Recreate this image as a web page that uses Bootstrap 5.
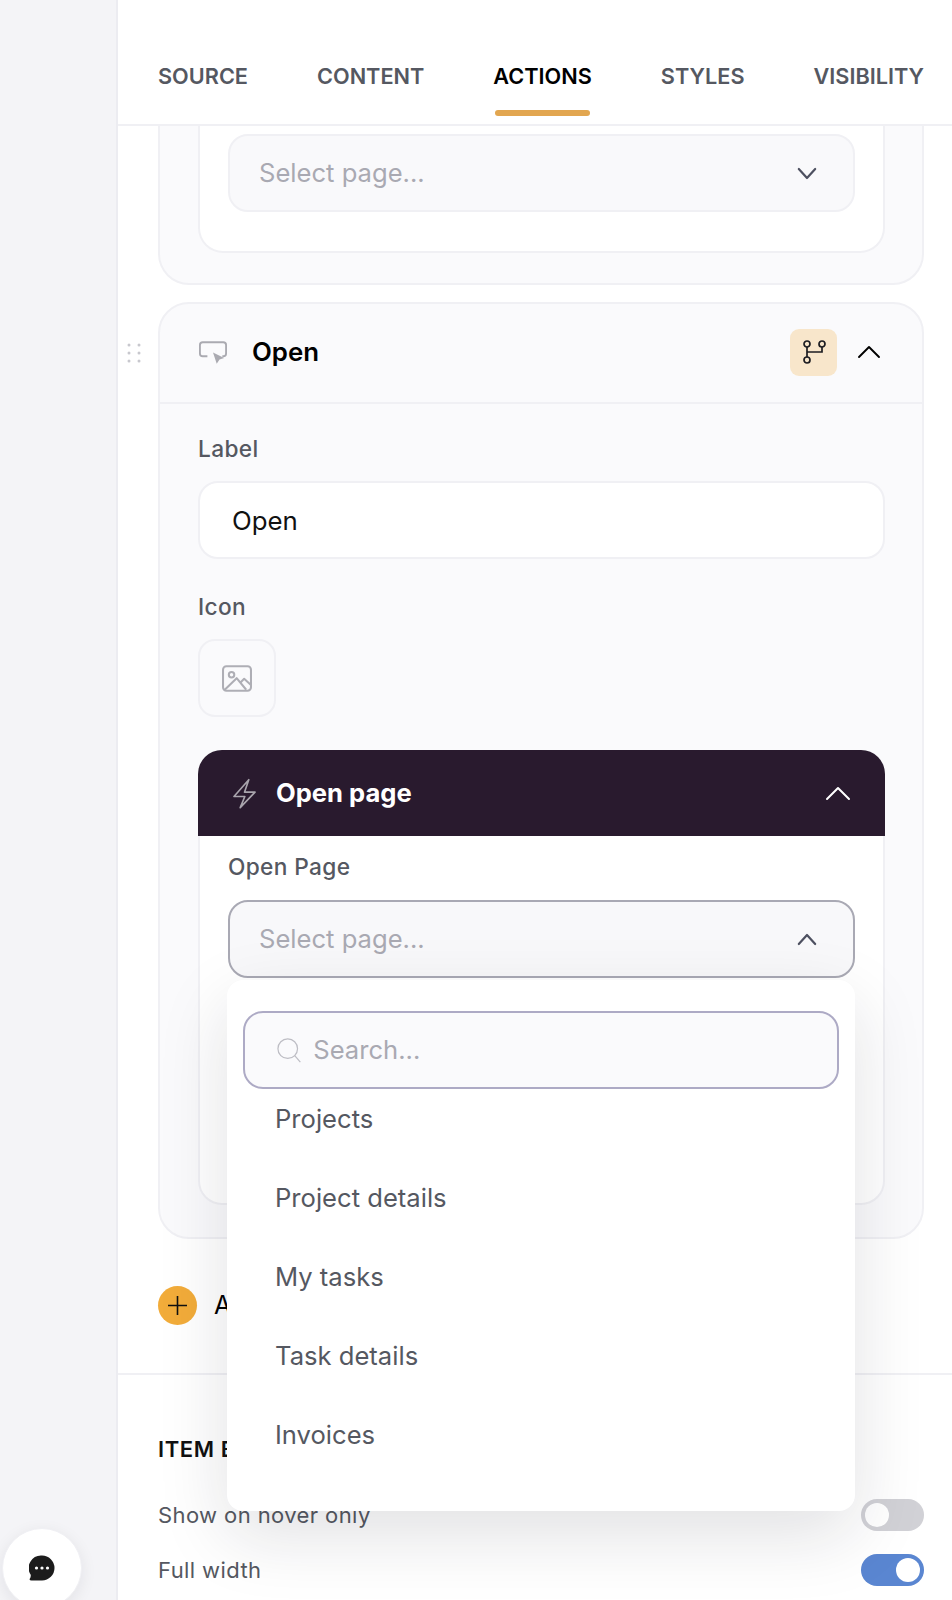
<!DOCTYPE html>
<html lang="en">
<head>
  <meta charset="UTF-8">
  <title>Actions panel</title>
  <meta name="viewport" content="width=device-width, initial-scale=1.0">
  <link rel="stylesheet" href="https://cdn.jsdelivr.net/npm/bootstrap@5.3.0/dist/css/bootstrap.min.css">
  <style>
    body {
      width: 952px;
      height: 1600px;
      overflow: hidden;
      font-family: Inter, "Liberation Sans", sans-serif;
      color: #000;
      background-color: #fff;
    }
    .rail {
      width: 118px;
      flex: none;
      background-color: #f4f4f7;
      border-right: 2px solid #ececf1;
    }
    .panel-main { width: 834px; flex: none; }
    .tabs-bar {
      height: 126px;
      padding: 60px 0 0 40px;
      gap: 69px;
      border-bottom: 2px solid #f0f0f4;
    }
    .tab-item {
      font-size: 21.7px;
      line-height: 32px;
      font-weight: 600;
      color: #555861;
      white-space: nowrap;
    }
    .tab-item.active { color: #000; }
    .tab-bar-line {
      display: block;
      height: 6px;
      margin: 18px 2px 0;
      border-radius: 3px;
    }
    .tab-item.active .tab-bar-line { background-color: #e2a650; }
    .panel-scroll { padding: 0 28px 0 40px; }
    .outer-box {
      background-color: #fafafc;
      border: 2px solid #f0f0f4;
      border-radius: 31px;
      overflow: visible;
    }
    .outer-cut {
      border-top: 0;
      border-top-left-radius: 0;
      border-top-right-radius: 0;
      padding: 0 37px 30px 38px;
      margin-bottom: 17px;
    }
    .inner-cut {
      background-color: #fff;
      border: 2px solid #f0f0f4;
      border-top: 0;
      border-radius: 0 0 25px 25px;
      padding: 8px 28px 39px 28px;
    }
    .fake-select {
      height: 78px;
      padding: 1px 36px 0 29px;
      background-color: #f9f9fb;
      border: 2px solid #f0f0f4;
      border-radius: 20px;
      font-size: 25.6px;
      color: #a9a9b2;
    }
    .fake-select.is-open {
      border-color: #a9a9b4;
      background-color: #f8f8fa;
    }
    .open-head {
      height: 100px;
      padding: 0 41px 2px 39px;
      border-bottom: 2px solid #f0f0f4;
    }
    .open-title { font-size: 25.8px; font-weight: 600; margin-left: 25px; }
    .drag-dots { position: absolute; left: -33px; top: 38px; }
    .branch-btn {
      width: 47px;
      height: 47px;
      background-color: #f8e6cb;
      border-radius: 9px;
      margin-right: 20px;
    }
    .open-body { padding: 29px 37px 32px 38px; }
    .field-label {
      font-size: 22.7px;
      line-height: 32px;
      font-weight: 500;
      letter-spacing: .35px;
      color: #555861;
      margin-bottom: 16px;
    }
    .label-input {
      height: 78px;
      padding: 1px 32px 0;
      margin-bottom: 32px;
      font-size: 25.8px;
      color: #111;
      border: 2px solid #f0f0f4;
      border-radius: 20px;
    }
    .icon-box {
      width: 78px;
      height: 78px;
      background-color: #fafafc;
      border: 2px solid #f0f0f4;
      border-radius: 17px;
      margin-bottom: 33px;
    }
    .action-box { border-radius: 24px; }
    .action-head {
      height: 86px;
      padding: 0 34px 0 35px;
      background-color: #291a2e;
      border-radius: 24px 24px 0 0;
      color: #fff;
      font-size: 25.6px;
      font-weight: 700;
    }
    .action-head .head-text { margin-left: 20px; }
    .action-body {
      height: 369px;
      padding: 15px 28px 0 28px;
      background-color: #fff;
      border: 2px solid #f0f0f4;
      border-top: 0;
      border-radius: 0 0 24px 24px;
    }
    .action-body .field-label { margin-bottom: 17px; }
    .select-wrap { position: relative; }
    .page-menu {
      position: absolute;
      left: -1px;
      top: 80px;
      width: 628px;
      height: 531px;
      z-index: 5;
      padding: 31px 16px 0;
      background-color: #fff;
      border-radius: 16px;
      box-shadow: 0 24px 70px rgba(20, 20, 40, .13);
    }
    .search-field {
      height: 78px;
      padding: 0 14px 0 32px;
      background-color: #fafafc;
      border: 2px solid #adaac5;
      border-radius: 20px;
    }
    .search-field input {
      border: 0;
      padding: 0;
      margin-left: 12px;
      background: transparent;
      font-size: 25.6px;
      box-shadow: none;
    }
    .search-field input::placeholder { color: #a9a9b2; opacity: 1; }
    .page-list .list-group-item {
      height: 79px;
      padding: 0 0 0 32px;
      border: 0;
      font-size: 25.6px;
      color: #555861;
      line-height: 60px;
    }
    .page-list { margin-top: 0; }
    .add-row {
      margin-top: 47px;
      padding-bottom: 48px;
      font-size: 25px;
      line-height: 39px;
    }
    .add-circle {
      width: 39px;
      height: 39px;
      margin-right: 17px;
      border-radius: 50%;
      background-color: #f2ac3a;
    }
    .section-rule { border-top: 2px solid #f0f0f4; margin: 0 -28px 0 -40px; }
    .section-title {
      margin-top: 58px;
      font-size: 22px;
      line-height: 32px;
      font-weight: 600;
      letter-spacing: .6px;
      color: #111;
    }
    .setting-row {
      height: 32px;
      font-size: 22px;
      color: #555861;
      letter-spacing: .4px;
      margin-bottom: 23px;
    }
    .section-title + .setting-row { margin-top: 34px; }
    .setting-row .form-check {
      min-height: 0;
      margin: 0;
      padding: 0;
      line-height: 0;
    }
    .setting-row .form-check-input {
      width: 63px;
      height: 32px;
      margin: 0;
      border: 0;
      background-color: #d1d1d6;
      background-image: url("data:image/svg+xml,%3csvg xmlns='http://www.w3.org/2000/svg' viewBox='-4 -4 8 8'%3e%3ccircle r='3' fill='%23fff'/%3e%3c/svg%3e");
      box-shadow: none;
    }
    .setting-row .form-check-input:checked { background-color: #5a86d1; }
    .chat-btn {
      position: absolute;
      left: 2px;
      top: 1528px;
      width: 80px;
      height: 80px;
      padding: 0;
      border: 1px solid #f0f0f4;
      border-radius: 50%;
      background-color: #fff;
      box-shadow: 0 4px 16px rgba(20, 20, 40, .08);
      z-index: 6;
    }
  </style>
</head>
<body>
  <div class="d-flex position-relative">
    <div class="rail"></div>

    <div class="panel-main">
      <div class="tabs-bar d-flex">
        <div class="tab-item">SOURCE<span class="tab-bar-line"></span></div>
        <div class="tab-item">CONTENT<span class="tab-bar-line"></span></div>
        <div class="tab-item active">ACTIONS<span class="tab-bar-line"></span></div>
        <div class="tab-item">STYLES<span class="tab-bar-line"></span></div>
        <div class="tab-item">VISIBILITY<span class="tab-bar-line"></span></div>
      </div>

      <div class="panel-scroll">
        <!-- previous action, scrolled under the tabs -->
        <div class="outer-box outer-cut">
          <div class="inner-cut">
            <div class="fake-select d-flex align-items-center justify-content-between">
              <span>Select page...</span>
              <svg width="20" height="13" viewBox="0 0 22 14" fill="none" stroke="#4d5060" stroke-width="2.4" stroke-linecap="round" stroke-linejoin="round"><path d="M2 2l9 10 9-10"/></svg>
            </div>
          </div>
        </div>

        <div class="outer-box position-relative">
          <svg class="drag-dots" width="16" height="22" viewBox="0 0 16 22" fill="#c8c8ce"><circle cx="2" cy="3" r="1.5"/><circle cx="12" cy="3" r="1.5"/><circle cx="2" cy="11" r="1.5"/><circle cx="12" cy="11" r="1.5"/><circle cx="2" cy="19" r="1.5"/><circle cx="12" cy="19" r="1.5"/></svg>

          <div class="open-head d-flex align-items-center">
            <svg width="28" height="24" viewBox="0 0 30 25" fill="none"><path d="M9 17H4a3 3 0 0 1-3-3V5a3 3 0 0 1 3-3h22a3 3 0 0 1 3 3v9a3 3 0 0 1-3 3h-1" stroke="#aaaab1" stroke-width="2"/><path d="M15 13l12 6-5 1.5-3 4.500z" fill="#aaaab1"/></svg>
            <span class="open-title">Open</span>
            <div class="branch-btn d-flex align-items-center justify-content-center ms-auto">
              <svg width="24" height="24" viewBox="0 0 24 24" fill="none" stroke="#1d1d22" stroke-width="1.7"><circle cx="5" cy="4" r="3"/><circle cx="20" cy="4" r="3"/><circle cx="5" cy="20" r="3"/><path d="M5 7v10M5 12h15V7"/></svg>
            </div>
            <svg width="24" height="14" viewBox="0 0 24 14" fill="none" stroke="#000" stroke-width="1.9" stroke-linecap="round" stroke-linejoin="round"><path d="M2 12L12 2l10 10"/></svg>
          </div>

          <div class="open-body">
            <div class="field-label">Label</div>
            <input class="form-control label-input" type="text" value="Open">

            <div class="field-label">Icon</div>
            <div class="icon-box d-flex align-items-center justify-content-center">
              <svg width="30" height="27" viewBox="127 226 88 78" fill="none" stroke="#aeaeb5" stroke-width="6" stroke-linejoin="round"><rect x="130" y="229" width="82" height="72" rx="10"/><circle cx="155" cy="254" r="8"/><path d="M135 298l35-34 28 34M182 276l10-10 20 18"/></svg>
            </div>

            <div class="action-box">
              <div class="action-head d-flex align-items-center">
                <svg width="23" height="31" viewBox="160 563 70 92" fill="none" stroke="#a9a5ad" stroke-width="5" stroke-linejoin="round"><path d="M208 567l-45 51 33 0-14 34 45-47-32 0z"/></svg>
                <span class="head-text">Open page</span>
                <svg class="ms-auto" width="26" height="15" viewBox="0 0 26 15" fill="none" stroke="#fff" stroke-width="2" stroke-linecap="round" stroke-linejoin="round"><path d="M2 13L13 2l11 11"/></svg>
              </div>
              <div class="action-body">
                <div class="field-label">Open Page</div>
                <div class="select-wrap">
                  <div class="fake-select is-open d-flex align-items-center justify-content-between">
                    <span>Select page...</span>
                    <svg width="20" height="13" viewBox="0 0 22 14" fill="none" stroke="#4d5060" stroke-width="2.4" stroke-linecap="round" stroke-linejoin="round"><path d="M2 12l9-10 9 10"/></svg>
                  </div>
                  <div class="page-menu">
                    <div class="search-field d-flex align-items-center">
                      <svg width="26" height="27" viewBox="0 0 26 27" fill="none" stroke="#bdbdc4" stroke-width="1.3"><circle cx="11.5" cy="11.5" r="10.5"/><path d="M19 19l6 7"/></svg>
                      <input class="form-control" type="text" placeholder="Search...">
                    </div>
                    <div class="list-group page-list">
                      <div class="list-group-item">Projects</div>
                      <div class="list-group-item">Project details</div>
                      <div class="list-group-item">My tasks</div>
                      <div class="list-group-item">Task details</div>
                      <div class="list-group-item">Invoices</div>
                    </div>
                  </div>
                </div>
              </div>
            </div>
          </div>
        </div>

        <div class="add-row d-flex align-items-center">
          <div class="add-circle d-flex align-items-center justify-content-center">
            <svg width="19" height="19" viewBox="0 0 19 19" stroke="#111" stroke-width="1.6"><path d="M9.5 0v19M0 9.5h19"/></svg>
          </div>
          <span>Add action</span>
        </div>

        <div class="section-rule"></div>

        <div class="section-title">ITEM BUTTONS</div>
        <div class="setting-row d-flex align-items-center justify-content-between">
          <span>Show on hover only</span>
          <div class="form-check form-switch"><input class="form-check-input" type="checkbox"></div>
        </div>
        <div class="setting-row d-flex align-items-center justify-content-between">
          <span>Full width</span>
          <div class="form-check form-switch"><input class="form-check-input" type="checkbox" checked></div>
        </div>
      </div>
    </div>

    <button class="chat-btn d-flex align-items-center justify-content-center" type="button" aria-label="Chat">
      <svg width="26" height="27" viewBox="0 0 26 27"><path d="M13 0.5a12.5 12.5 0 0 1 0 25H2.500q-1.800 0-2-1.200 1.600-2 1.200-4.500A12.500 12.500 0 0 1 13 0.500z" fill="#1c1c1c"/><circle cx="7.500" cy="13" r="1.600" fill="#fff"/><circle cx="13" cy="13" r="1.600" fill="#fff"/><circle cx="18.500" cy="13" r="1.600" fill="#fff"/></svg>
    </button>
  </div>

  <script src="https://cdn.jsdelivr.net/npm/bootstrap@5.3.0/dist/js/bootstrap.bundle.min.js"></script>
</body>
</html>
